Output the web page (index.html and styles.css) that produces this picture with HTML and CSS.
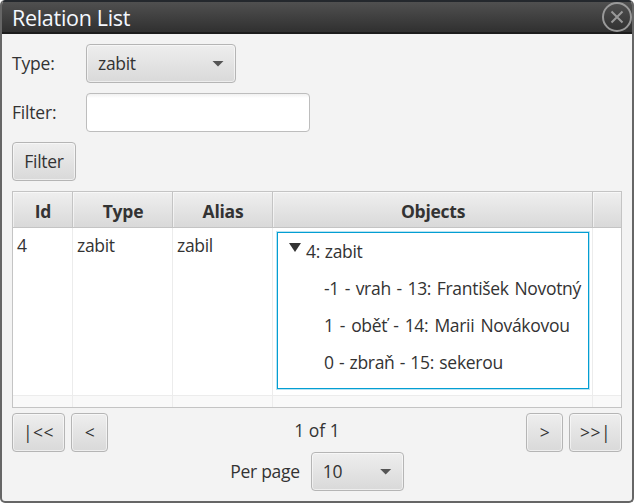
FILE: index.html
```html
<!DOCTYPE html>
<html lang="en">
<head>
<meta charset="utf-8">
<title>Relation List</title>
<link rel="stylesheet" href="styles.css">
</head>
<body>
<div class="window">
  <header class="titlebar">
    <span class="title">Relation List</span>
    <svg class="close" width="32" height="32" viewBox="0 0 32 32"><circle cx="16" cy="16" r="14"/><path d="M10.5 10.5l11 11M21.5 10.5l-11 11"/></svg>
  </header>
  <main class="content">
    <div class="form">
      <span class="label type">Type:</span>
      <div class="control combo"><span class="value">zabit</span><i class="arrow"></i></div>
      <span class="label filter">Filter:</span>
      <input class="field" type="text" aria-label="Filter">
    </div>
    <div class="control button apply"><span>Filter</span></div>
    <div class="table">
      <div class="row head">
        <div>Id</div><div>Type</div><div>Alias</div><div>Objects</div><div></div>
      </div>
      <div class="row body">
        <div>4</div><div class="c-type">zabit</div><div class="c-alias">zabil</div>
        <div class="objects">
          <div class="tree">
            <div class="node root"><i class="disclosure"></i><span>4: zabit</span></div>
            <div class="node"><span class="n1">-1 - vrah - 13: František Novotný</span></div>
            <div class="node"><span class="n2">1 - oběť - 14: Marii Novákovou</span></div>
            <div class="node"><span class="n3">0 - zbraň - 15: sekerou</span></div>
          </div>
        </div>
        <div></div>
      </div>
      <div class="row empty"><div></div><div></div><div></div><div></div><div></div></div>
    </div>
    <nav class="pager">
      <div class="control button wide"><span>|&lt;&lt;</span></div>
      <div class="control button narrow"><span>&lt;</span></div>
      <span class="status">1 of 1</span>
      <div class="control button narrow"><span>&gt;</span></div>
      <div class="control button wide"><span>&gt;&gt;|</span></div>
    </nav>
    <div class="perpage">
      <span class="pp-label">Per page</span>
      <div class="control combo small"><span class="value">10</span><i class="arrow"></i></div>
    </div>
  </main>
</div>
</body>
</html>
```

FILE: styles.css
```css
* { box-sizing: border-box; }
body {
  margin: 0;
  background: #fff;
  color: #333;
  font: 17.5px/24px "Open Sans", "Noto Sans", sans-serif;
  letter-spacing: -0.3px;
  white-space: nowrap;
}
.window {
  width: 634px;
  height: 503px;
  background: #f3f3f3;
  border: 2px solid #666;
  border-top: 0;
  border-radius: 5px;
  overflow: hidden;
}
.titlebar {
  display: flex;
  justify-content: space-between;
  align-items: center;
  width: 634px;
  height: 34px;
  margin-left: -2px;
  padding: 1px 0 0 12px;
  border: 1px solid #1b1d1f;
  border-top: 2px solid #24282d;
  border-bottom: 2px solid #1c1c1c;
  background: linear-gradient(#505050, #303030);
}
.title { color: #f4f8ff; font-size: 21.5px; line-height: 28px; letter-spacing: -0.3px; margin-left: -1px; }
.close { flex: none; margin: 0 0.5px 1px 0; fill: none; stroke: #999; stroke-width: 2; overflow: visible; }
.content { padding: 10px 10px 0; }
.form {
  display: grid;
  grid-template-columns: 74px max-content;
  grid-template-rows: 39px 39px;
  row-gap: 10px;
  align-items: center;
}
.label, .pp-label { padding-bottom: 1px; }
.label { letter-spacing: -0.2px; }
.control {
  display: flex;
  align-items: center;
  height: 39px;
  border: 1px solid #b5b5b5;
  border-radius: 4px;
  background: linear-gradient(#eee, #d9d9d9);
  box-shadow: inset 0 0 0 1px rgba(255,255,255,.55);
}
.control > span { padding-bottom: 2px; }
.combo { width: 150px; padding: 0 11px; justify-content: space-between; }
.arrow {
  width: 12px; height: 6px;
  background: #555;
  clip-path: polygon(0 0, 100% 0, 50% 100%);
}
.field {
  width: 224px; height: 39px;
  border: 1px solid #bdbdbd;
  border-radius: 4px;
  background: linear-gradient(#f1f1f1, #fff 4px);
  outline: 0;
}
.button { justify-content: center; }
.apply { width: 64px; margin-top: 10px; }
.table {
  margin-top: 10px;
  height: 217px;
  border: 1px solid #c4c4c4;
  background: #fff;
}
.row { display: grid; grid-template-columns: 60px 100px 100px 320px 1fr; }
.row > div { border-right: 1px solid #ececec; }
.row > div:last-child { border-right: 0; }
.head { height: 36px; border-bottom: 1px solid #c4c4c4; font-weight: 700; letter-spacing: -0.25px; }
.head > div {
  display: flex; align-items: center; justify-content: center;
  padding: 2px 0 0 1px;
  border-color: #c4c4c4;
  background: linear-gradient(#efefef, #d9d9d9);
  box-shadow: inset 1px 1px 0 rgba(255,255,255,.55);
}
.body { height: 168px; border-bottom: 1px solid #ececec; }
.body > div { padding: 5px 0 0 4px; }
.body > .objects { padding: 4px 3px 0 4px; }
.tree {
  height: 157px;
  border: 1px solid #039ed3;
  box-shadow: 0 0 0 1px #b9e3f1;
}
.node { height: 37px; padding: 6px 0 0 46px; word-spacing: 1.4px; }
.root { display: flex; padding-left: 11px; word-spacing: 0.5px; }
.n2 { word-spacing: 1.8px; }
.n3 { word-spacing: 1px; }
.disclosure { width: 12px; height: 9px; margin: 4px 5px 0 0; background: #333; clip-path: polygon(0 0, 100% 0, 50% 100%); }
.empty { height: 11px; background: #f9f9f9; }
.empty > div { height: 11px; }
.pager { display: flex; gap: 6px; margin-top: 5px; }
.wide { width: 53px; letter-spacing: 0.5px; }
.narrow { width: 37px; }
.status { flex: 1; text-align: center; padding-top: 5px; letter-spacing: 0; }
.perpage { display: flex; align-items: center; justify-content: center; gap: 11px; }
.small { width: 93px; }
```
